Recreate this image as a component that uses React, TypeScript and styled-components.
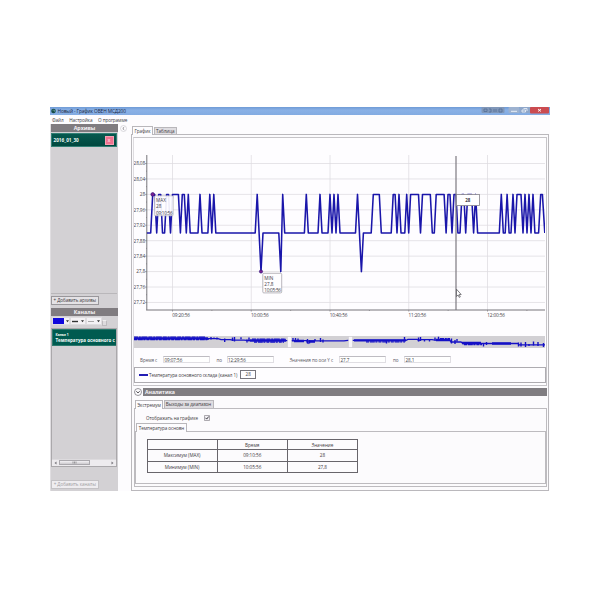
import React from "react";
import styled, { createGlobalStyle } from "styled-components";

const Global = createGlobalStyle`
  * { box-sizing: border-box; }
  html, body { margin: 0; background: #fff; }
  body { font-family: "Open Sans", "Noto Sans", sans-serif; font-size: 4.6px; line-height: 6px; color: #3c3a40; }
`;

const Page = styled.main`
  width: 600px;
  height: 600px;
  padding: 107px 50px 109px;
  background: #fff;
  overflow: hidden;
`;
const Window = styled.div`
  width: 500px;
  height: 384px;
  display: flex;
  flex-direction: column;
  background: #fdfcfe;
`;
const TitleBar = styled.header`
  height: 8px;
  display: flex;
  align-items: center;
  gap: 2px;
  padding-left: 0.5px;
  background: linear-gradient(#6f9bd6, #8ab1e6 40%, #83abe2);
  color: #17243d;
  white-space: nowrap;
`;
const Title = styled.span`
  font-size: 4.75px;
  letter-spacing: -0.09px;
`;
const Caption = styled.div`
  height: 6px;
  align-self: flex-start;
  display: flex;
  margin-left: auto;
  width: 69px;
`;
const MenuBar = styled.nav`
  height: 9px;
  display: flex;
  gap: 5.6px;
  padding: 1.5px 2px 0;
  font-size: 4.65px;
  white-space: nowrap;
  letter-spacing: -0.08px;
`;
const Body = styled.div`
  height: 367px;
  display: flex;
`;
const Sidebar = styled.aside`
  width: 68px;
  display: flex;
  flex-direction: column;
  background: #d3d1d4;
  border-left: 1px solid #e0dee1;
  padding-right: 1px;
`;
const SideHead = styled.h2`
  height: 8px;
  margin: 0;
  background: #807c80;
  color: #f5f3f5;
  font-size: 5.3px;
  line-height: 8px;
  text-align: center;
  font-weight: 700;
  margin-right: -1px;
`;
const ArchiveList = styled.div`
  height: 162px;
  padding-top: 1px;
  border-bottom: 1px solid #b9b7ba;
`;
const Archive = styled.div`
  height: 14px;
  display: flex;
  align-items: center;
  justify-content: space-between;
  padding: 0 2.5px 0 1.5px;
  border: 1px solid #328075;
  background: linear-gradient(#07594f, #00483f);
  color: #eef8f5;
  font-size: 4.7px;
  font-weight: 700;
`;
const CloseChip = styled.span`
  width: 9px;
  height: 9px;
  background: #ee7390;
  border: 1px solid #f3a0b2;
  color: #fff;
  text-align: center;
  line-height: 6.5px;
  font-size: 5px;
  font-weight: 400;
`;
const AddRow = styled.div<{ $tall?: boolean }>`
  height: ${(p) => (p.$tall ? 24.5 : 14)}px;
  padding-top: ${(p) => (p.$tall ? 13.5 : 2)}px;
`;
const AddButton = styled.button<{ $muted?: boolean }>`
  display: block;
  width: 47.5px;
  height: 9px;
  margin: 0;
  padding: 0;
  border: 1px solid ${(p) => (p.$muted ? "#c4c2c5" : "#99979b")};
  background: ${(p) => (p.$muted ? "#efedf0" : "#e4e2e5")};
  color: ${(p) => (p.$muted ? "#a19fa3" : "#3c3a40")};
  font: 4.55px/7px "Open Sans", sans-serif;
  letter-spacing: -0.03px;
  white-space: nowrap;
`;
const StyleTools = styled.div`
  height: 12px;
  display: flex;
  align-items: flex-start;
  padding: 1px 0 0 0.5px;
`;
const ToolBox = styled.span<{ $w: number }>`
  width: ${(p) => p.$w}px;
  height: 8px;
  background: #f4f2f5;
  border: 1px solid #dfdde0;
  svg { display: block; }
`;
const Grip = styled.span`
  width: 5px;
  height: 6px;
  margin-top: 3px;
  border: 1px solid #bcbabd;
  border-top-color: #eee;
  background: #dddbde;
`;
const ChannelList = styled.div`
  height: 138.5px;
  display: flex;
  flex-direction: column;
  justify-content: space-between;
  border: 1px solid #aaa8ab;
  background: #d3d1d4;
`;
const Channel = styled.div`
  height: 16.5px;
  padding: 1.5px 0 0 2.5px;
  border: 1px solid #2c796d;
  border-right: 0;
  background: #005b50;
  color: #f4fbf9;
  white-space: nowrap;
  font-weight: 700;
  font-size: 4.5px;
  letter-spacing: -0.03px;
  line-height: 6px;
`;
const ChannelNumber = styled.div`
  font-size: 3.3px;
  line-height: 5px;
`;
const ScrollBar = styled.div`
  height: 7px;
  display: flex;
  align-items: center;
  justify-content: space-between;
  padding: 0 2px;
  background: #edebee;
  border-top: 1px solid #dddbde;
`;
const Thumb = styled.span`
  width: 31px;
  height: 5px;
  margin-right: 20px;
  border: 1px solid #aaa8ad;
  background: linear-gradient(#f4f2f5, #cccace);
  display: flex;
  align-items: center;
  justify-content: center;
`;
const Collapse = styled.div`
  width: 13px;
  padding: 1px 0 0 2px;
  svg { display: block; }
`;
const Content = styled.section`
  width: 418px;
  padding-top: 1px;
`;
const Tabs = styled.div`
  display: flex;
  align-items: flex-end;
  height: 9px;
  padding-left: 1px;
  gap: 0.5px;
`;
const Tab = styled.div<{ $active?: boolean; $w: number }>`
  width: ${(p) => p.$w}px;
  height: ${(p) => (p.$active ? 9 : 7.5)}px;
  margin-bottom: ${(p) => (p.$active ? -1 : 0)}px;
  border: 1px solid #b9b7bb;
  border-bottom: 0;
  background: ${(p) => (p.$active ? "#fdfcfe" : "#dfdde1")};
  line-height: ${(p) => (p.$active ? 8 : 7)}px;
  text-align: center;
  font-size: 4.6px;
  letter-spacing: -0.06px;
  white-space: nowrap;
`;
const Frame = styled.div`
  height: 356.5px;
  border: 1px solid #bab8bc;
  padding: 2px 1.5px 0 1px;
  background: #fcfbfd;
`;
const ChartCard = styled.div`
  height: 248.5px;
  border: 1px solid #c6c4c8;
  border-left-color: #dedce0;
  background: #fefdff;
  display: flex;
  flex-direction: column;
`;
const Plot = styled.svg`
  display: block;
  width: 411px;
  height: 198px;
  flex: none;
`;
const Strip = styled.svg`
  display: block;
  width: 411px;
  height: 12px;
  background: #d2d0d4;
  flex: none;
`;
const RangeRow = styled.div`
  height: 18.5px;
  display: flex;
  align-items: flex-end;
  padding: 0 0 4px 6px;
  white-space: nowrap;
  font-size: 4.6px;
`;
const RangeLabel = styled.label<{ $w: number }>`
  width: ${(p) => p.$w}px;
  color: #5b595f;
  letter-spacing: -0.07px;
`;
const Field = styled.span<{ $gap: number }>`
  width: 47px;
  height: 7px;
  margin-right: ${(p) => p.$gap}px;
  padding-left: 0.5px;
  border: 1px solid #e0dee3;
  border-top-color: #bebcc2;
  line-height: 6.5px;
  letter-spacing: -0.06px;
  background: #fff;
`;
const Legend = styled.div`
  height: 16.5px;
  display: flex;
  align-items: center;
  border: 1px solid #aeacb1;
  padding-left: 4px;
  font-size: 4.55px;
  letter-spacing: -0.04px;
  white-space: nowrap;
`;
const LegendLine = styled.i`
  width: 8.5px;
  height: 1.5px;
  margin-right: 1.5px;
  background: #241db4;
`;
const LegendValue = styled.b`
  width: 16.5px;
  height: 9px;
  margin-left: 2.5px;
  border: 1px solid #77757c;
  font-weight: 400;
  line-height: 7px;
  text-align: center;
`;
const SectionHead = styled.div`
  height: 10px;
  margin-top: 1px;
  display: flex;
  align-items: center;
  svg { width: 8px; height: 8px; margin: 0 1.5px 0 0.5px; flex: none; }
`;
const SectionTitle = styled.h2`
  flex: 1;
  height: 8px;
  margin: 0;
  padding-left: 2px;
  background: #807d81;
  color: #f4f2f5;
  font-size: 5.2px;
  letter-spacing: -0.03px;
  line-height: 8px;
`;
const Analytics = styled.div`
  padding: 2px 0 0 1px;
`;
const Panel = styled.div<{ $h: number }>`
  height: ${(p) => p.$h}px;
  border: 1px solid #bdbbbf;
  background: #fcfbfd;
`;
const CheckRow = styled.div`
  height: 13.5px;
  padding: 5px 0 0 11px;
  display: flex;
  align-items: center;
  gap: 6px;
  font-size: 4.55px;
  letter-spacing: -0.06px;
  white-space: nowrap;
  svg { display: block; }
`;
const Table = styled.table`
  width: 211.5px;
  margin: 7px 0 0 10.5px;
  border-collapse: collapse;
  table-layout: fixed;
  font-size: 4.65px;
  line-height: 6px;
  letter-spacing: -0.03px;
  td, th {
    padding: 0;
    border: 1px solid #68656b;
    font-weight: 400;
    text-align: center;
  }
  tr { height: 11.5px; }
  thead tr { height: 10px; }
`;

const HIGH = 28;
const BASE = 27.9;
const LOW = 27.8;

type Point = [number, number];
const samples: Point[] = [
  [147, BASE], [150.7, BASE], [152.7, HIGH], [154.7, HIGH], [156.7, BASE], [158.7, HIGH], [160.7, HIGH], [162.5, BASE], [164.6, BASE], [166.6, HIGH], [168.5, HIGH], [170.5, BASE],
  [172.5, HIGH], [178.4, HIGH], [180.4, BASE], [182.3, HIGH], [184.3, HIGH], [186.3, BASE], [188.3, HIGH], [190.2, BASE],
  [198, BASE], [200, HIGH], [202, BASE], [207.9, BASE], [209.8, HIGH], [211.8, BASE], [213.8, HIGH], [215.8, BASE],
  [255.2, BASE], [257.2, HIGH], [261, LOW], [263, BASE], [278.8, BASE], [280.8, LOW], [282.7, HIGH], [284.7, BASE],
  [304.4, BASE], [306.3, HIGH], [308.3, BASE], [318, BASE], [320, HIGH], [322, BASE], [328, BASE], [330, HIGH], [332, BASE], [334, HIGH], [336, BASE], [338, HIGH], [340, BASE],
  [355.5, BASE], [357.5, HIGH], [361.4, LOW], [363.4, BASE], [371.2, BASE], [373.3, HIGH], [379.3, HIGH], [381.3, BASE], [391.2, BASE], [393.2, HIGH], [395.1, HIGH], [397, BASE], [399, HIGH],
  [401, BASE], [404.8, BASE], [406.7, HIGH], [408.7, BASE], [410.6, HIGH], [418.5, HIGH], [420.5, BASE], [422.5, HIGH], [430.3, HIGH], [432.3, BASE], [434.3, BASE], [436.2, HIGH], [444.1, HIGH],
  [446.1, BASE], [448, HIGH], [450, HIGH], [452, BASE], [454, HIGH], [456, HIGH], [457.9, BASE], [460, BASE], [462, HIGH], [463.8, HIGH], [465.7, BASE], [467.7, HIGH], [471.6, HIGH], [473.6, BASE], [475.6, HIGH], [477.6, BASE],
  [499.3, BASE], [501.3, HIGH], [503.3, BASE], [505.2, BASE], [507.1, HIGH], [509.1, BASE], [511, BASE], [513, HIGH], [515, BASE], [517, HIGH], [521, HIGH], [523, BASE], [525, HIGH], [527, BASE], [529, HIGH], [531, BASE], [533, HIGH], [534.9, BASE], [538.6, BASE], [540.7, HIGH], [542.4, HIGH], [544.8, BASE],
];
const yOf = (v: number) => 194.4 + (HIGH - v) * 386;
const series = samples.map(([x, v]) => `${x},${yOf(v).toFixed(1)}`).join(" ");

const valueTicks = ["28,08", "28,04", "28", "27,96", "27,92", "27,88", "27,84", "27,8", "27,76", "27,72"];
const timeTicks = ["09:20:56", "10:00:56", "10:40:56", "11:20:56", "12:00:56"];

const Chart = () => (
  <Plot viewBox="134 138 411 198" fontSize="4.7" fill="#424047">
    <g stroke="#dddbe0" strokeWidth=".75">
      {valueTicks.map((t, i) => <path key={t} d={`M147 ${163.5 + i * 15.44}H545`} />)}
      {timeTicks.map((t, i) => <path key={t} d={`M${172.5 + i * 78.75} 155V310`} />)}
    </g>
    <path d="M146.800 155V310H545" fill="none" stroke="#77757b" />
    <g stroke="#77757b" strokeWidth=".6">
      {valueTicks.map((t, i) => <path key={t} d={`M145 ${163.5 + i * 15.44}h2M146 ${171.2 + i * 15.44}h1`} />)}
      {timeTicks.map((t, i) => <path key={t} d={`M${172.5 + i * 78.75} 310v1.600m39.400-1.600v1`} />)}
    </g>
    {valueTicks.map((t, i) => (
      <text key={t} x="145" y={165.3 + i * 15.44} textAnchor="end" letterSpacing="-.1">{t}</text>
    ))}
    {timeTicks.map((t, i) => (
      <text key={t} x={172.3 + i * 78.75} y="316.7" textLength="17.6">{t}</text>
    ))}
    <polyline points={series} fill="none" stroke="#1a16aa" strokeWidth="1.55" strokeLinejoin="round" />
    <rect x="154.4" y="195.8" width="18.8" height="20" rx="1" fill="#fefdff" fillOpacity=".93" stroke="#aaa7ae" strokeWidth=".6" />
    <text x="156" y="202.3">MAX</text>
    <text x="156" y="208.4">28</text>
    <text x="156" y="214.7" textLength="16.7">09:10:56</text>
    <rect x="262.8" y="273.3" width="18.9" height="19.6" rx="1" fill="#fefdff" stroke="#9c99a0" strokeWidth=".7" />
    <text x="264.3" y="279.5">MIN</text>
    <text x="264.3" y="285.7">27,8</text>
    <text x="264.3" y="292" textLength="16.7">10:05:56</text>
    <g fill="#7c2090" stroke="#30137e" strokeWidth=".7">
      <circle cx="152.7" cy="194.4" r="1.8" />
      <circle cx="261" cy="271.5" r="1.6" />
    </g>
    <path d="M456 156V310" stroke="#7c7a80" strokeWidth="1.2" />
    <rect x="456.4" y="194.4" width="23" height="11.2" fill="#fff" stroke="#85828a" strokeWidth=".8" />
    <text x="467.8" y="201.8" textAnchor="middle" fontWeight="700" fontSize="4.5">28</text>
    <path d="M456.500 289.200v7.300l1.600-1.500 1.100 2.400 1.100-.5-1.100-2.400h2z" fill="#fff" stroke="#4c4a50" strokeWidth=".7" />
  </Plot>
);

const Overview = () => (
  <Strip viewBox="134 336 411 12">
    <g fill="none" stroke="#1510c6">
      <path strokeWidth="2.400" d="M134.500 338.400H208M250 340.500H286M294 341H304M309 341.500H315M354 340.400H406M436 340H450M462 343H481M492 343.500H511" />
      <path strokeWidth="1.300" d="M134 338.600H218l3 1H230l3 .5H244l3 .2h3M286 340.700H307V342l1 .8v-2H344l4-.5h58l2-1h9l2 1.300 1-1h12l3 .6H450l1 1.800h10l2 1.500H518l1 1.300H545" />
      <path strokeWidth="1.300" strokeDasharray="3 .8 5 .6 2 1" d="M134 339.600H208M254 342H284M366 341.800H405M464 344.500H482" />
      <path strokeWidth="1.300" strokeDasharray="4 .8 2 .6 6 1" d="M134 337.200H205M252 339.200H286M440 338.700H450" />
      <path strokeWidth="1.400" d="M208 338v2m3-3v2.500m3-2v1.500m3-1.500v2M224.700 338.500v3.500M232.500 337.500v3.500M234.500 337v4.500M241 337.300v2M247 339.500v3M249 337.500v4M293 338v3.500M295.500 338v3M298 338.500v3M307.500 339v4.500M309.500 340v3.500M315 339v2M320.500 338v4M323 339.500v3M386.500 340v3.500M404.500 337v4M418.500 337.500v4M420.500 337v4M424.500 339v2.500M429.500 339v2.500M435 337.500v3M438.500 336.800v4M451.500 338.500v5M455 340v4M457 339v2.500M483.500 343v3.500M486.500 342v3M518.500 342.500v4M521 342.500v4M525.500 342v5M529 344v2M533.500 341.500v4M538 342v4M543.500 343v4" />
    </g>
    <g fill="#f8f6f9" stroke="#c9c7cc" strokeWidth=".5">
      <rect x="287.500" y="336.500" width="4" height="11" rx="1" />
      <rect x="348.500" y="336.500" width="4" height="11" rx="1" />
    </g>
  </Strip>
);

const rows = [
  ["Максимум (MAX)", "09:10:56", "28"],
  ["Минимум (MIN)", "10:05:56", "27,8"],
];

export default function App() {
  return (
    <Page>
      <Global />
      <Window>
        <TitleBar>
          <svg width="5" height="6" viewBox="0 0 5 6"><circle cx="2.500" cy="3" r="2.300" fill="#164b48" /><path d="M1.500 2.200h2v1.500" fill="none" stroke="#80b6ae" strokeWidth=".6" /></svg>
          <Title>Новый - График ОВЕН МСД200</Title>
          <Caption>
            <svg width="69" height="7" viewBox="0 0 69 7">
              <rect x=".5" width="23" height="6" rx="1" fill="#8097b9" />
              <path d="M3 4.500V2h3v2.500zM8 2h2v3H8m5-3v3m2-3v3m3-3h3v3h-3z" fill="none" stroke="#536f98" strokeWidth=".8" />
              <rect x="27.500" width="11" height="6" rx="1" fill="#9db2d0" />
              <rect x="38.500" width="10.500" height="6" fill="#8fa7ca" />
              <path d="M30 4.300h6" stroke="#e9eff8" />
              <path d="M41 3h3.500v2H41zm1.500-1.500H46V4" fill="none" stroke="#edf2fa" strokeWidth=".8" />
              <rect x="49" width="19" height="6.500" rx="1" fill="#cb4b50" />
              <path d="m57 2 3 2.500m0-2.500-3 2.500" stroke="#fff" strokeWidth=".9" />
            </svg>
          </Caption>
        </TitleBar>
        <MenuBar><span>Файл</span><span>Настройка</span><span>О программе</span></MenuBar>
        <Body>
          <Sidebar>
            <SideHead>Архивы</SideHead>
            <ArchiveList>
              <Archive>2016_01_30<CloseChip>x</CloseChip></Archive>
            </ArchiveList>
            <AddRow><AddButton>+ Добавить архивы</AddButton></AddRow>
            <SideHead>Каналы</SideHead>
            <StyleTools>
              <ToolBox $w={18}><svg width="16" height="6"><path d="M0 0h11v6H0z" fill="#1008dc" /><path d="M13 2.300h3l-1.500 2z" fill="#333" /></svg></ToolBox>
              <ToolBox $w={16}><svg width="14" height="6"><path d="M1 3.500h6" stroke="#333" strokeWidth="1.400" /><path d="M10 2.300h3l-1.500 2z" fill="#333" /></svg></ToolBox>
              <ToolBox $w={16}><svg width="14" height="6"><path d="M1 3.500h6" stroke="#777" strokeWidth=".6" /><path d="M10 2.300h3l-1.500 2z" fill="#333" /></svg></ToolBox>
              <Grip />
            </StyleTools>
            <ChannelList>
              <Channel><ChannelNumber>Канал 1</ChannelNumber>Температура основного с</Channel>
              <ScrollBar>
                <svg width="3" height="4"><path d="M2.500.5.500 2l2 1.500z" fill="#77757b" /></svg>
                <Thumb><svg width="5" height="3"><path d="M1 .5v2M2.500.5v2M4 .5v2" stroke="#66646a" strokeWidth=".6" /></svg></Thumb>
                <svg width="3" height="4"><path d="m.5.500 2 1.500-2 1.500z" fill="#77757b" /></svg>
              </ScrollBar>
            </ChannelList>
            <AddRow $tall><AddButton $muted>+ Добавить каналы</AddButton></AddRow>
          </Sidebar>
          <Collapse>
            <svg width="7" height="7" viewBox="0 0 7 7" fill="none"><circle cx="3.500" cy="3.500" r="3" stroke="#c6c4ca" strokeWidth=".6" /><path d="M4.200 2.200 2.800 3.500l1.400 1.300" stroke="#56545b" strokeWidth=".7" /></svg>
          </Collapse>
          <Content>
            <Tabs><Tab $active $w={21}>График</Tab><Tab $w={23.5}>Таблица</Tab></Tabs>
            <Frame>
              <ChartCard>
                <Chart />
                <Overview />
                <RangeRow>
                  <RangeLabel $w={23}>Время с</RangeLabel><Field $gap={6.5}>09:07:56</Field>
                  <RangeLabel $w={10}>по</RangeLabel><Field $gap={16}>12:29:56</Field>
                  <RangeLabel $w={49.5}>Значения по оси Y с</RangeLabel><Field $gap={7}>27,7</Field>
                  <RangeLabel $w={11}>по</RangeLabel><Field $gap={0}>28,1</Field>
                </RangeRow>
                <Legend><LegendLine />Температура основного склада (канал 1)<LegendValue>28</LegendValue></Legend>
              </ChartCard>
              <SectionHead>
                <svg viewBox="0 0 8 8" fill="none"><circle cx="4" cy="4" r="3.500" stroke="#6c6a70" strokeWidth=".7" /><path d="m2.300 3.300 1.700 1.600 1.700-1.600" stroke="#3c3a40" strokeWidth=".9" /></svg>
                <SectionTitle>Аналитика</SectionTitle>
              </SectionHead>
              <Analytics>
                <Tabs><Tab $active $w={28}>Экстремум</Tab><Tab $w={50}>Выходы за диапазон</Tab></Tabs>
                <Panel $h={79}>
                  <CheckRow>Отображать на графике
                    <svg width="6" height="6" viewBox="0 0 6 6" fill="#f2f0f4"><path d="M.5.500h5v5h-5z" stroke="#8c8a91" strokeWidth=".7" /><path d="m1.500 2.800 1.200 1.300L4.700 1.500" fill="none" stroke="#2d2b33" strokeWidth=".9" /></svg>
                  </CheckRow>
                  <Tabs><Tab $active $w={51}>Температура основн</Tab></Tabs>
                  <Panel $h={53}>
                    <Table>
                      <thead><tr><th /><th>Время</th><th>Значение</th></tr></thead>
                      <tbody>{rows.map((r) => <tr key={r[0]}>{r.map((c) => <td key={c}>{c}</td>)}</tr>)}</tbody>
                    </Table>
                  </Panel>
                </Panel>
              </Analytics>
            </Frame>
          </Content>
        </Body>
      </Window>
    </Page>
  );
}
